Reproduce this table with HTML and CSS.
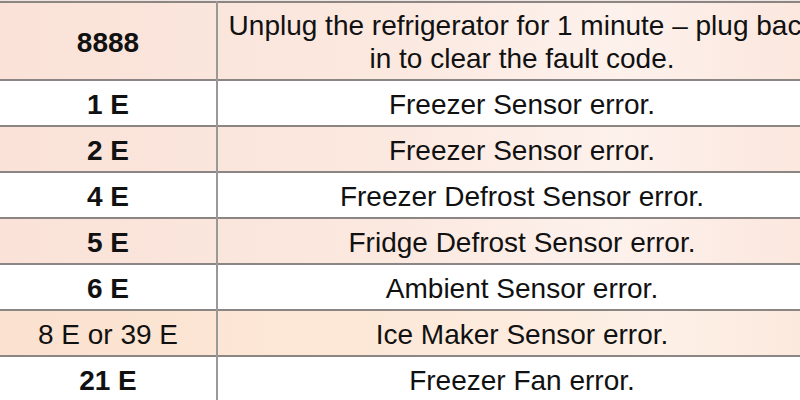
FILE: index.html
```html
<!DOCTYPE html>
<html lang="en">
<head>
<meta charset="utf-8">
<title>Fault codes</title>
<link rel="stylesheet" href="styles.css">
</head>
<body>
<div class="frame">
<table class="codes">
  <tbody>
    <tr class="row tall peach">
      <td class="code">8888</td>
      <td class="desc">Unplug the refrigerator for 1 minute – plug back<br>in to clear the fault code.</td>
    </tr>
    <tr class="row">
      <td class="code">1 E</td>
      <td class="desc">Freezer Sensor error.</td>
    </tr>
    <tr class="row peach">
      <td class="code">2 E</td>
      <td class="desc">Freezer Sensor error.</td>
    </tr>
    <tr class="row">
      <td class="code">4 E</td>
      <td class="desc">Freezer Defrost Sensor error.</td>
    </tr>
    <tr class="row peach">
      <td class="code">5 E</td>
      <td class="desc">Fridge Defrost Sensor error.</td>
    </tr>
    <tr class="row">
      <td class="code">6 E</td>
      <td class="desc">Ambient Sensor error.</td>
    </tr>
    <tr class="row orange">
      <td class="code plain">8 E or 39 E</td>
      <td class="desc">Ice Maker Sensor error.</td>
    </tr>
    <tr class="row">
      <td class="code">21 E</td>
      <td class="desc">Freezer Fan error.</td>
    </tr>
  </tbody>
</table>
</div>
</body>
</html>
```

FILE: styles.css
```css
html, body {
  margin: 0;
  padding: 0;
  width: 800px;
  height: 400px;
  overflow: hidden;
  background: #ffffff;
}

.frame {
  padding-top: 1px;
  background: #efe4e0;
}

.codes {
  border-collapse: collapse;
  width: 826px;
  table-layout: fixed;
  font-family: "Liberation Sans", Arial, sans-serif;
  font-size: 28px;
  color: #111111;
  background: #ffffff;
}

.row {
  height: 46px;
  border-top: 2px solid #8b8684;
}

.row.tall {
  height: 78px;
}

.peach {
  background: linear-gradient(90deg, #fae2d8 0%, #fbe8df 45%, #fdf1ec 75%, #fbe6dc 100%);
}

.orange {
  background: linear-gradient(90deg, #fbe1cf 0%, #fde9d9 50%, #fdf0e6 80%, #fce8dc 100%);
}

.code {
  width: 216px;
  padding: 2px 0 0 0;
  text-align: center;
  vertical-align: middle;
  font-weight: bold;
  border-right: 2px solid #9a9898;
  line-height: 33px;
}

.code.plain {
  font-weight: normal;
}

.desc {
  padding: 2px 10px 0 10px;
  text-align: center;
  vertical-align: middle;
  line-height: 33px;
  white-space: nowrap;
}
```
